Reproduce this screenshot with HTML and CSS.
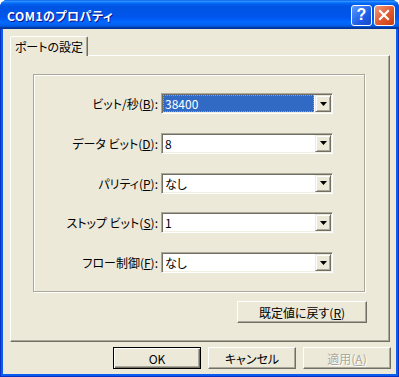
FILE: index.html
```html
<!DOCTYPE html>
<html lang="ja">
<head>
  <meta charset="UTF-8">
  <title>COM1のプロパティ</title>
  <link rel="stylesheet" href="styles.css">
</head>
<body>

  <div class="window">
    <div class="titlebar">
      <span class="title">COM1のプロパティ</span>
      <div class="caption-buttons">
        <span class="cap help">?</span>
        <span class="cap close">
          <svg viewBox="0 0 21 21" width="21" height="21"><path d="M6 6L14 14M14 6L6 14" stroke="#fff" stroke-width="2.2" stroke-linecap="square"/></svg>
        </span>
      </div>
    </div>

    <div class="client">
      <div class="tabs">
        <div class="tab active">ポートの設定</div>
      </div>

      <div class="panel">
        <div class="group">
          <label class="field-label">ビット/秒(<u>B</u>):</label>
          <div class="combo focused">
            <span class="value">38400</span>
            <span class="drop"><svg viewBox="0 0 7 4" width="7" height="4"><path d="M0 0h7L3.5 4z"/></svg></span>
          </div>

          <label class="field-label">データ ビット(<u>D</u>):</label>
          <div class="combo">
            <span class="value">8</span>
            <span class="drop"><svg viewBox="0 0 7 4" width="7" height="4"><path d="M0 0h7L3.5 4z"/></svg></span>
          </div>

          <label class="field-label">パリティ(<u>P</u>):</label>
          <div class="combo">
            <span class="value">なし</span>
            <span class="drop"><svg viewBox="0 0 7 4" width="7" height="4"><path d="M0 0h7L3.5 4z"/></svg></span>
          </div>

          <label class="field-label">ストップ ビット(<u>S</u>):</label>
          <div class="combo">
            <span class="value">1</span>
            <span class="drop"><svg viewBox="0 0 7 4" width="7" height="4"><path d="M0 0h7L3.5 4z"/></svg></span>
          </div>

          <label class="field-label">フロー制御(<u>F</u>):</label>
          <div class="combo">
            <span class="value">なし</span>
            <span class="drop"><svg viewBox="0 0 7 4" width="7" height="4"><path d="M0 0h7L3.5 4z"/></svg></span>
          </div>
        </div>

        <div class="panel-actions">
          <button class="btn wide">既定値に戻す(<u>R</u>)</button>
        </div>
      </div>

      <div class="dialog-actions">
        <button class="btn default">OK</button>
        <button class="btn">キャンセル</button>
        <button class="btn disabled">適用(<u>A</u>)</button>
      </div>
    </div>
  </div>

</body>
</html>
```

FILE: styles.css
```css
body {
  margin: 0;
  font-family: "Noto Sans CJK JP", sans-serif;
  font-size: 12px;
  font-feature-settings: "palt";
  color: #000;
}

.window {
  width: 399px; height: 377px;
  box-sizing: border-box;
  display: flex; flex-direction: column;
  background: #0c5bef;
  border-radius: 8px 8px 0 0;
  box-shadow: inset 1px 0 #0733c4, inset -1px 0 #0733c4, inset 0 -1px #0733c4;
}

.titlebar {
  height: 29px;
  box-sizing: border-box;
  display: flex; align-items: center;
  padding: 1px 4px 0 7px;
  border-radius: 7px 7px 0 0;
  background: linear-gradient(180deg, #0058ee 0%, #3593ff 4%, #288eff 6%, #127dff 8%, #036ffc 10%, #0262ee 14%, #0057e5 20%, #0054e3 24%, #0055eb 56%, #005bf5 66%, #026afe 76%, #0062ef 86%, #0052d6 92%, #0040ab 94%, #003092 100%);
}
.title {
  flex: 1;
  color: #fff; font-weight: bold; font-size: 12px;
  letter-spacing: .5px;
  text-shadow: 1px 1px #0f1089;
}
.caption-buttons { display: flex; gap: 2px; }
.cap {
  width: 21px; height: 21px;
  box-sizing: border-box;
  border: 1px solid #fff; border-radius: 3px;
  display: flex; align-items: center; justify-content: center;
  overflow: hidden;
}
.cap.help {
  background: linear-gradient(135deg, #5c9bff, #1d5ee8 60%, #1848c8);
  color: #fff; font-family: "Liberation Sans", sans-serif;
  font-weight: bold; font-size: 16px;
}
.cap.close {
  background: linear-gradient(135deg, #f19a7c, #e0582e 55%, #c63d12);
}
.cap.close svg { flex-shrink: 0; }

.client {
  flex: 1;
  margin: 0 3px 3px;
  background: #ece9d8;
  display: flex; flex-direction: column;
  padding: 7px 5px 0 7px;
}

.tabs { display: flex; position: relative; z-index: 1; }
.tab {
  width: 78px; height: 20px;
  box-sizing: border-box;
  margin-bottom: -1px;
  display: flex; align-items: center; justify-content: center;
  background: #ece9d8;
  border: 1px solid; border-bottom: none;
  border-color: #fff #716f64 transparent #fff;
  border-radius: 2px 2px 0 0;
  box-shadow: inset -1px 0 #aca899;
}

.panel {
  width: 380px; height: 287px;
  box-sizing: border-box;
  border: 1px solid;
  border-color: #fff #716f64 #716f64 #fff;
  box-shadow: inset -1px -1px #aca899;
  padding: 18px 22px 0;
  display: flex; flex-direction: column;
}

.group {
  width: 332px; height: 218px;
  box-sizing: border-box;
  border: 1px solid #aca899;
  box-shadow: inset 1px 1px #fff, 1px 1px #fff;
  padding-top: 18px;
  display: grid;
  grid-template-columns: 124px 172px;
  grid-auto-rows: 21px;
  column-gap: 3px; row-gap: 18.75px;
  align-content: start;
}
.field-label {
  height: 21px;
  display: flex; align-items: center; justify-content: flex-end;
  white-space: nowrap;
}

.combo {
  height: 21px;
  box-sizing: border-box;
  display: flex;
  padding: 1px;
  background: #fff;
  border: 1px solid;
  border-color: #aca899 #fff #fff #aca899;
  box-shadow: inset 1px 1px #716f64, inset -1px -1px #f1efe2;
}
.combo .value {
  flex: 1;
  display: flex; align-items: center;
  padding-left: 2px;
  margin-right: 1px;
}
.combo.focused .value {
  background: #316ac5; color: #fff;
  outline: 1px dotted #ce953a; outline-offset: -1px;
}
.drop {
  width: 16px;
  box-sizing: border-box;
  display: flex; align-items: center; justify-content: center;
  background: #ece9d8;
  border: 1px solid;
  border-color: #ece9d8 #716f64 #716f64 #ece9d8;
  box-shadow: inset 1px 1px #fff, inset -1px -1px #aca899;
}

.panel-actions {
  display: flex; justify-content: flex-end;
  margin-top: 9px;
}

.btn {
  height: 22px; width: 88px;
  box-sizing: border-box;
  padding: 0;
  font: inherit; color: #000;
  background: #ece9d8;
  border: 1px solid;
  border-color: #fff #716f64 #716f64 #fff;
  box-shadow: inset -1px -1px #aca899;
}
.btn.wide { width: 130px; }
.btn.default {
  border: 1px solid #000;
  box-shadow: inset 1px 1px #fff, inset -1px -1px #716f64, inset -2px -2px #aca899;
}
.btn.disabled { color: #aca899; text-shadow: 1px 1px #fff; }

.dialog-actions {
  display: flex; justify-content: flex-end;
  gap: 7px;
  margin-top: 5px;
}
```
